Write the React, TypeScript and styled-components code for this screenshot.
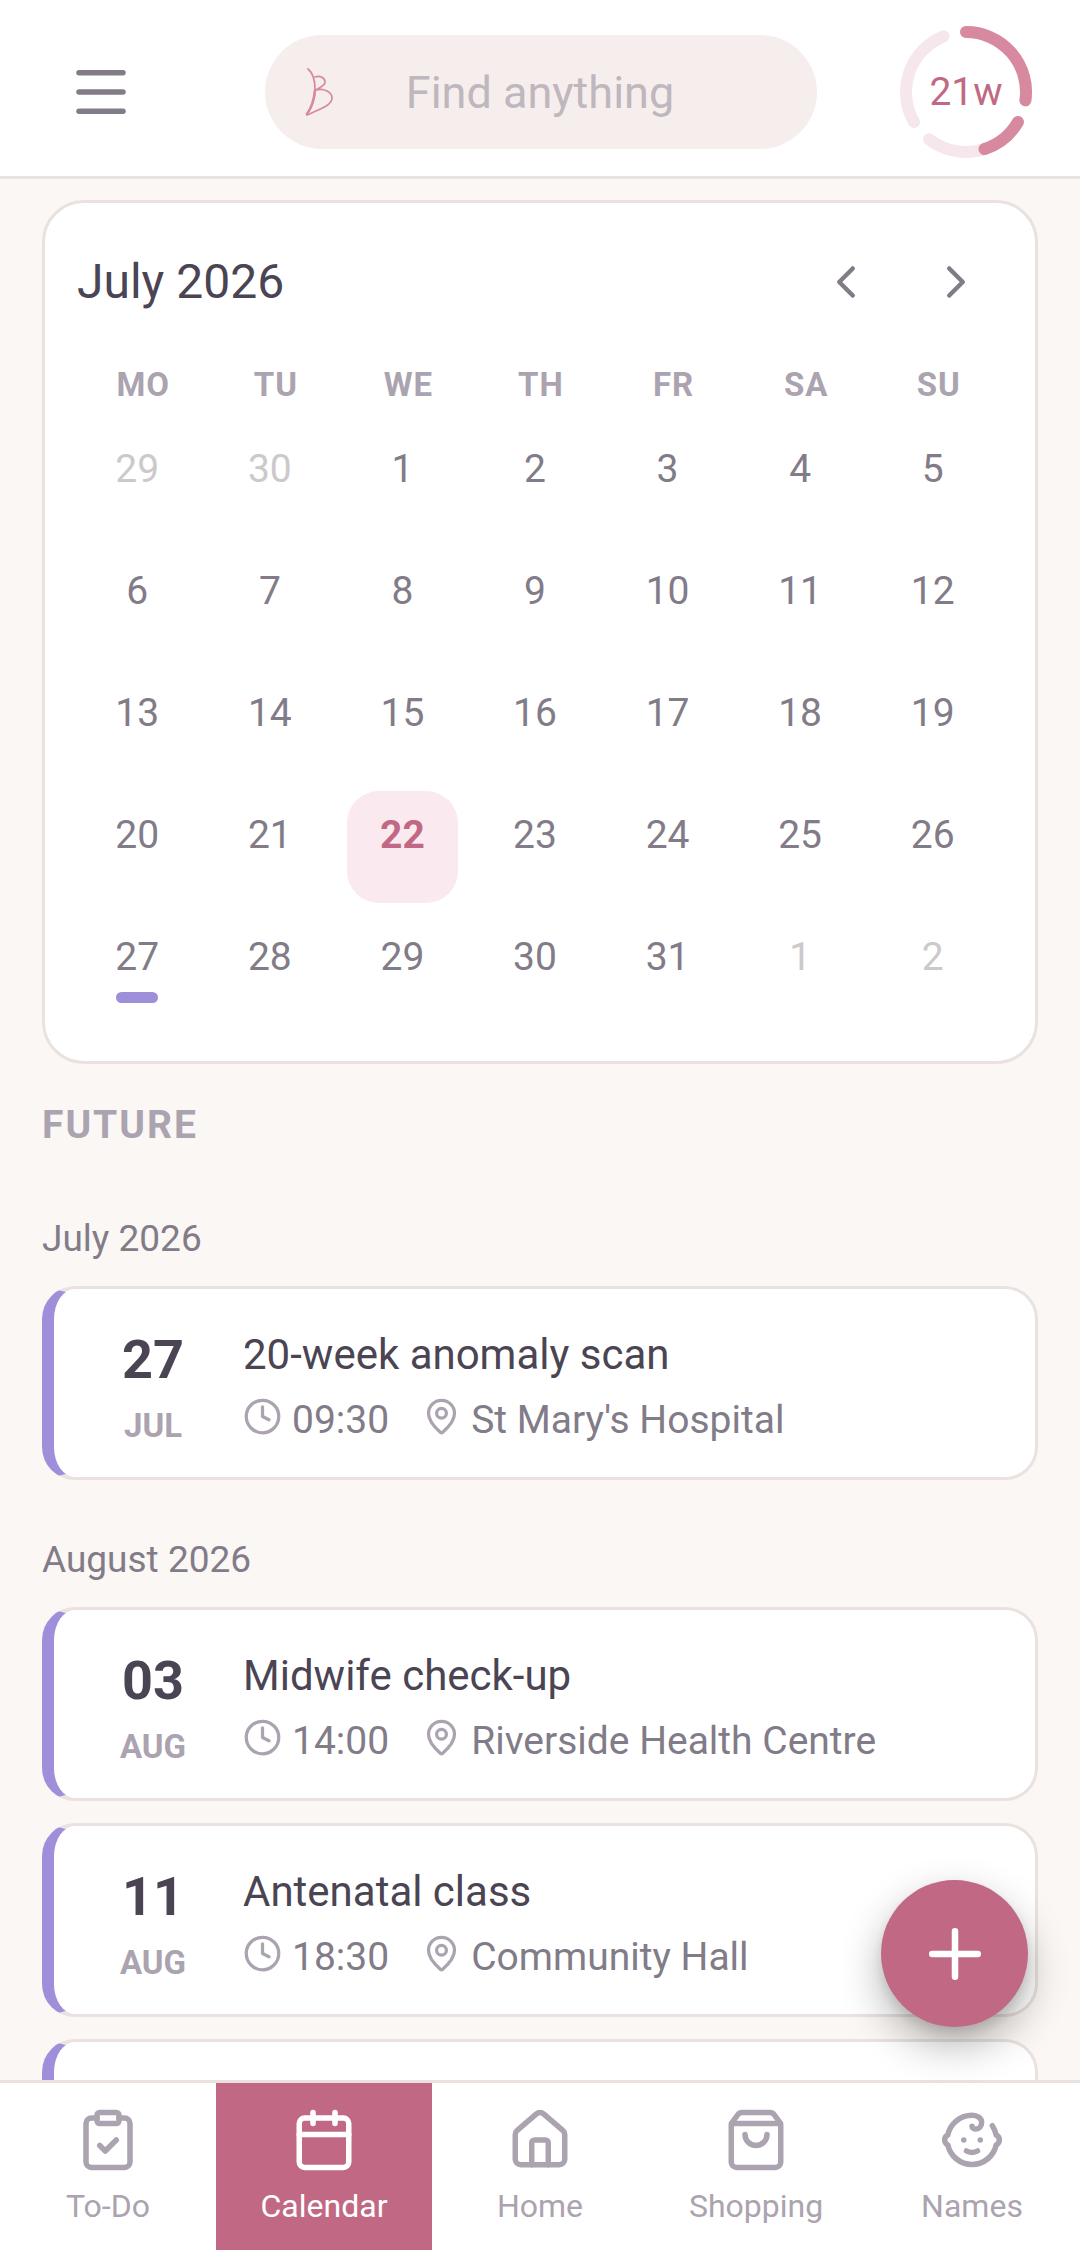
import React from "react";
import styled, { createGlobalStyle } from "styled-components";
import {
  Baby,
  Calendar,
  ChevronLeft,
  ChevronRight,
  ClipboardCheck,
  Clock,
  House,
  MapPin,
  Menu,
  Plus,
  ShoppingBag,
  type LucideIcon,
} from "lucide-react";

const color = {
  page: "#fbf7f4",
  surface: "#ffffff",
  line: "#e9e2df",
  ink: "#4a4453",
  text: "#827b88",
  muted: "#aba3af",
  faint: "#cbc9cb",
  field: "#f6eeec",
  placeholder: "#bfb6be",
  rose: "#c16984",
  roseMid: "#d78a9f",
  rosePale: "#f5e7eb",
  roseTint: "#faeaf0",
  violet: "#9f8fda",
};

const GlobalStyle = createGlobalStyle`
  *, *::before, *::after { box-sizing: border-box; }
  body {
    margin: 0;
    background: ${color.page};
    color: ${color.ink};
    font-family: Roboto, "Noto Sans", sans-serif;
  }
  button, input { font: inherit; }
  button { border: 0; padding: 0; background: none; color: inherit; cursor: pointer; }
  h1, h2, h3, p, ul { margin: 0; padding: 0; font-weight: 400; }
  ul { list-style: none; }
  svg { display: block; flex: none; }
`;

const Screen = styled.div`
  display: flex;
  flex-direction: column;
  height: 100vh;
`;

const TopBar = styled.header`
  display: flex;
  align-items: center;
  flex: none;
  height: 179px;
  padding: 8px 48px 0 53px;
  border-bottom: 3px solid ${color.line};
  background: ${color.surface};
`;

const MenuButton = styled.button`
  display: grid;
  place-items: center;
  width: 96px;
  height: 96px;
  color: ${color.text};
`;

const SearchField = styled.label`
  display: flex;
  align-items: center;
  flex: 1;
  min-width: 0;
  height: 114px;
  margin: 0 83px 0 116px;
  padding: 0 38px;
  border-radius: 57px;
  background: ${color.field};
`;

const SearchInput = styled.input`
  flex: 1;
  min-width: 0;
  height: 100%;
  padding: 0 32px 0 0;
  border: 0;
  outline: 0;
  background: transparent;
  color: ${color.ink};
  font-size: 45px;
  text-align: center;
  &::placeholder { color: ${color.placeholder}; opacity: 1; }
`;

const WeekButton = styled.button`
  display: grid;
  place-items: center;
  width: 132px;
  height: 132px;
  color: ${color.rose};
  font-size: 39px;
  > * { grid-area: 1 / 1; }
`;

const Content = styled.main`
  flex: 1;
  min-height: 0;
  overflow-y: auto;
  scrollbar-width: none;
  padding: 21px 42px 0;
`;

const CalendarCard = styled.section`
  padding: 30px 30px 26px 32px;
  border: 3px solid ${color.line};
  border-radius: 42px;
  background: ${color.surface};
`;

const CalendarHeader = styled.div`
  display: flex;
  align-items: center;
  justify-content: space-between;
  height: 98px;
`;

const CalendarTitle = styled.h1`
  font-size: 48px;
  line-height: 56px;
`;

const MonthButtons = styled.div`
  display: flex;
  gap: 12px;
`;

const MonthButton = styled.button`
  display: grid;
  place-items: center;
  width: 98px;
  height: 98px;
  color: ${color.text};
`;

const WeekdayRow = styled.div`
  display: grid;
  grid-template-columns: repeat(7, 1fr);
  padding: 35px 0 21px;
`;

const Weekday = styled.span`
  color: ${color.muted};
  font-size: 33px;
  font-weight: 700;
  line-height: 38px;
  letter-spacing: 1px;
  text-align: center;
`;

const DayGrid = styled.div`
  display: grid;
  grid-template-columns: repeat(7, 1fr);
`;

const DayCell = styled.div`
  padding: 0 17px 10px 5px;
`;

const Day = styled.button<{ $outside?: boolean; $today?: boolean }>`
  display: flex;
  flex-direction: column;
  align-items: center;
  gap: 12px;
  width: 100%;
  height: 112px;
  padding-top: 21px;
  border-radius: 32px;
  background: ${(p) => (p.$today ? color.roseTint : "transparent")};
  color: ${(p) => (p.$today ? color.rose : p.$outside ? color.faint : color.text)};
  font-size: 39px;
  font-weight: ${(p) => (p.$today ? 700 : 400)};
  line-height: 46px;
`;

const EventMark = styled.span`
  width: 42px;
  height: 11px;
  border-radius: 6px;
  background: ${color.violet};
`;

const SectionTitle = styled.h2`
  padding: 38px 0 0;
  color: ${color.muted};
  font-size: 39px;
  font-weight: 700;
  line-height: 46px;
  letter-spacing: 2px;
`;

const MonthTitle = styled.h3<{ $first?: boolean }>`
  padding: ${(p) => (p.$first ? 70 : 59)}px 0 26px;
  color: ${color.text};
  font-size: 37px;
  line-height: 42px;
`;

const EventList = styled.ul`
  display: flex;
  flex-direction: column;
  gap: 22px;
`;

const EventCard = styled.li`
  display: flex;
  gap: 27px;
  min-height: 194px;
  padding: 36px 30px 19px 36px;
  border: 3px solid ${color.line};
  border-left: 12px solid ${color.violet};
  border-radius: 33px;
  background: ${color.surface};
`;

const EventDate = styled.div`
  display: flex;
  flex-direction: column;
  align-items: center;
  flex: none;
  width: 126px;
`;

const EventDay = styled.span`
  font-size: 54px;
  font-weight: 700;
  line-height: 70px;
`;

const EventMonth = styled.span`
  color: ${color.muted};
  font-size: 33px;
  font-weight: 700;
  line-height: 62px;
`;

const EventBody = styled.div`
  flex: 1;
  min-width: 0;
  padding-top: 5px;
`;

const EventTitle = styled.p`
  font-size: 42px;
  line-height: 50px;
`;

const EventMeta = styled.div`
  display: flex;
  flex-wrap: wrap;
  gap: 0 33px;
  padding-top: 17px;
`;

const MetaItem = styled.span`
  display: flex;
  align-items: flex-start;
  gap: 10px;
  color: ${color.text};
  font-size: 39px;
  line-height: 46px;
  svg { color: ${color.muted}; }
`;

const AddButton = styled.button`
  position: fixed;
  right: 52px;
  bottom: 223px;
  display: grid;
  place-items: center;
  width: 147px;
  height: 147px;
  border-radius: 50%;
  background: ${color.rose};
  color: #fff;
  box-shadow: 0 18px 42px rgba(0, 0, 0, 0.3), 0 6px 12px rgba(0, 0, 0, 0.1);
`;

const TabBar = styled.nav`
  display: grid;
  grid-template-columns: repeat(5, 1fr);
  flex: none;
  height: 170px;
  border-top: 3px solid ${color.line};
  background: ${color.surface};
`;

const Tab = styled.a<{ $active?: boolean }>`
  display: flex;
  flex-direction: column;
  align-items: center;
  gap: 14px;
  padding-top: 24px;
  background: ${(p) => (p.$active ? color.rose : "transparent")};
  color: ${(p) => (p.$active ? "#fff" : color.muted)};
  font-size: 32px;
  line-height: 38px;
  text-decoration: none;
`;

function BrandMark() {
  return (
    <svg width="30" height="52" viewBox="0 0 30 52" fill="none" stroke={color.roseMid} strokeLinecap="round" strokeLinejoin="round" aria-hidden="true">
      <path d="M5 3C10 7 12 15 12 23C12 34 9 41 4 48" strokeWidth="1.8" />
      <path d="M12 24C11 35 9 41 4 48" strokeWidth="2.6" />
      <path d="M12 11C17 9 22 12 22 16C22 20 17 21 13 24C21 22 29 26 29 32C29 39 19 42 4 49" strokeWidth="1.7" />
    </svg>
  );
}

/* Point on the ring, measured clockwise from twelve o'clock. */
function ringPoint(angle: number) {
  const rad = ((angle - 90) * Math.PI) / 180;
  return `${66 + 60 * Math.cos(rad)} ${66 + 60 * Math.sin(rad)}`;
}

function RingArc({ from, to, stroke }: { from: number; to: number; stroke: string }) {
  return <path d={`M${ringPoint(from)}A60 60 0 0 1 ${ringPoint(to)}`} stroke={stroke} />;
}

const trimesters = [0, 120, 240];
const trimesterSpan = 98;
const progressAngle = 162;

function WeekRing() {
  return (
    <svg width="132" height="132" viewBox="0 0 132 132" fill="none" strokeWidth="12" strokeLinecap="round" aria-hidden="true">
      {trimesters.map((start) => (
        <RingArc key={start} from={start} to={start + trimesterSpan} stroke={color.rosePale} />
      ))}
      {trimesters
        .filter((start) => start < progressAngle)
        .map((start) => (
          <RingArc key={start} from={start} to={Math.min(start + trimesterSpan, progressAngle)} stroke={color.roseMid} />
        ))}
    </svg>
  );
}

const weekdays = ["MO", "TU", "WE", "TH", "FR", "SA", "SU"];

const days = Array.from({ length: 35 }, (_, i) => {
  const n = i - 1;
  if (n < 1) return { label: 30 + n, outside: true };
  if (n > 31) return { label: n - 31, outside: true };
  return { label: n, outside: false, today: n === 22, marked: n === 27 };
});

type EventInfo = { day: string; month: string; title: string; time: string; place: string };

const july: EventInfo[] = [
  { day: "27", month: "JUL", title: "20-week anomaly scan", time: "09:30", place: "St Mary's Hospital" },
];

const august: EventInfo[] = [
  { day: "03", month: "AUG", title: "Midwife check-up", time: "14:00", place: "Riverside Health Centre" },
  { day: "11", month: "AUG", title: "Antenatal class", time: "18:30", place: "Community Hall" },
];

const tabs: { label: string; icon: LucideIcon; active?: boolean }[] = [
  { label: "To-Do", icon: ClipboardCheck },
  { label: "Calendar", icon: Calendar, active: true },
  { label: "Home", icon: House },
  { label: "Shopping", icon: ShoppingBag },
  { label: "Names", icon: Baby },
];

function EventItem({ day, month, title, time, place }: EventInfo) {
  return (
    <EventCard>
      <EventDate>
        <EventDay>{day}</EventDay>
        <EventMonth>{month}</EventMonth>
      </EventDate>
      <EventBody>
        <EventTitle>{title}</EventTitle>
        <EventMeta>
          <MetaItem>
            <Clock size={39} />
            {time}
          </MetaItem>
          <MetaItem>
            <MapPin size={39} />
            {place}
          </MetaItem>
        </EventMeta>
      </EventBody>
    </EventCard>
  );
}

export default function App() {
  return (
    <>
      <GlobalStyle />
      <Screen>
        <TopBar>
          <MenuButton aria-label="Menu">
            <Menu size={66} />
          </MenuButton>
          <SearchField>
            <BrandMark />
            <SearchInput type="text" placeholder="Find anything" aria-label="Find anything" />
          </SearchField>
          <WeekButton>
            <WeekRing />
            <span>21w</span>
          </WeekButton>
        </TopBar>

        <Content>
          <CalendarCard>
            <CalendarHeader>
              <CalendarTitle>July 2026</CalendarTitle>
              <MonthButtons>
                <MonthButton aria-label="Previous month">
                  <ChevronLeft size={54} />
                </MonthButton>
                <MonthButton aria-label="Next month">
                  <ChevronRight size={54} />
                </MonthButton>
              </MonthButtons>
            </CalendarHeader>
            <WeekdayRow>
              {weekdays.map((d) => (
                <Weekday key={d}>{d}</Weekday>
              ))}
            </WeekdayRow>
            <DayGrid>
              {days.map((d, i) => (
                <DayCell key={i}>
                  <Day $outside={d.outside} $today={d.today}>
                    {d.label}
                    {d.marked && <EventMark />}
                  </Day>
                </DayCell>
              ))}
            </DayGrid>
          </CalendarCard>

          <SectionTitle>FUTURE</SectionTitle>
          <MonthTitle $first>July 2026</MonthTitle>
          <EventList>
            {july.map((e) => (
              <EventItem key={e.title} {...e} />
            ))}
          </EventList>
          <MonthTitle>August 2026</MonthTitle>
          <EventList>
            {august.map((e) => (
              <EventItem key={e.title} {...e} />
            ))}
            <EventCard />
          </EventList>
        </Content>

        <TabBar>
          {tabs.map(({ label, icon: Icon, active }) => (
            <Tab key={label} href="#" $active={active} aria-current={active ? "page" : undefined}>
              <Icon size={66} />
              {label}
            </Tab>
          ))}
        </TabBar>
      </Screen>
      <AddButton aria-label="Add appointment">
        <Plus size={78} />
      </AddButton>
    </>
  );
}
